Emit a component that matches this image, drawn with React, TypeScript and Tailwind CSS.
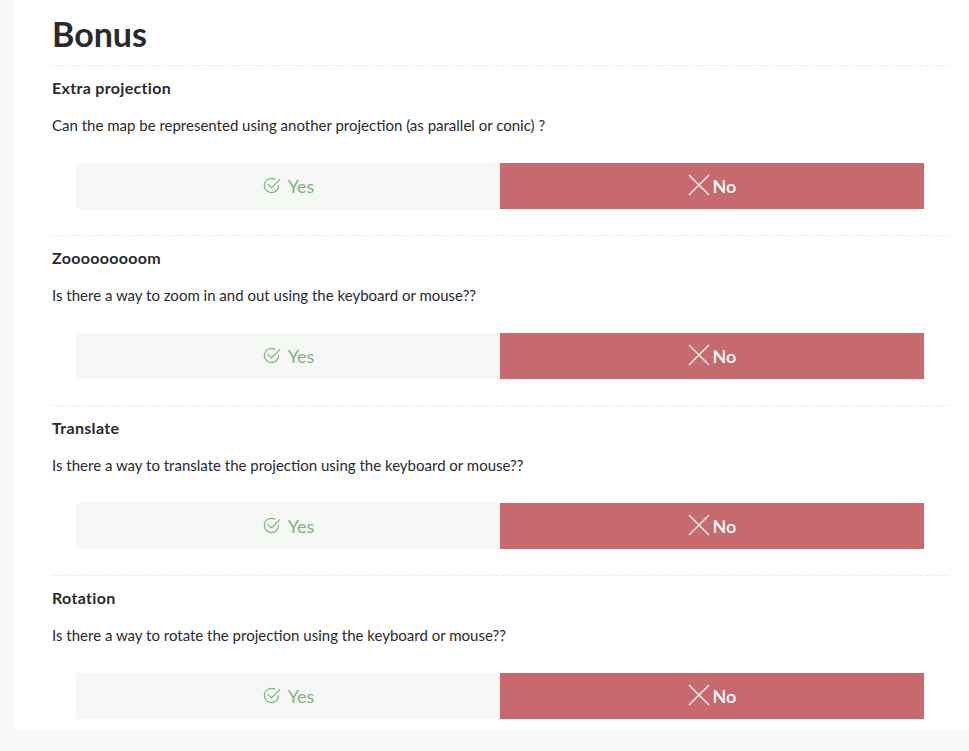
import React from "react";

const sections = [
  {
    title: "Extra projection",
    desc: "Can the map be represented using another projection (as parallel or conic) ?",
  },
  {
    title: "Zooooooooom",
    desc: "Is there a way to zoom in and out using the keyboard or mouse??",
  },
  {
    title: "Translate",
    desc: "Is there a way to translate the projection using the keyboard or mouse??",
  },
  {
    title: "Rotation",
    desc: "Is there a way to rotate the projection using the keyboard or mouse??",
  },
];

function CheckCircle() {
  return (
    <svg width="19" height="19" viewBox="0 0 16 16" fill="currentColor" className="mr-[7px] mb-[2px]">
      <path d="M2.5 8a5.5 5.5 0 0 1 8.25-4.764.5.5 0 0 0 .5-.866A6.5 6.5 0 1 0 14.5 8a.5.5 0 0 0-1 0 5.5 5.5 0 1 1-11 0" />
      <path d="M15.354 3.354a.5.5 0 0 0-.708-.708L8 9.293 5.354 6.646a.5.5 0 1 0-.708.708l3 3a.5.5 0 0 0 .708 0z" />
    </svg>
  );
}

function Cross() {
  return (
    <svg width="22" height="22" viewBox="0 0 22 22" fill="none" stroke="currentColor" strokeWidth="1.3" className="mr-[3px] mb-[2px]">
      <path d="M1 1 L21 21 M21 1 L1 21" />
    </svg>
  );
}

export default function App() {
  return (
    <div
      className="min-h-[751px] bg-[#f8f8f8] pl-[14px]"
      style={{ fontFamily: "Lato, 'Noto Sans', sans-serif" }}
    >
      <div className="bg-white pl-[38px] pr-[21px] pb-[11px] text-[#2a2a2e]">
        <h1 className="pt-[13px] pb-[11px] text-[34px] leading-[41px] font-bold">Bonus</h1>
        {sections.map((s, i) => (
          <div
            key={s.title}
            className={
              i === sections.length - 1
                ? "border-t border-dashed border-[#ebebeb] pt-[11px]"
                : "border-t border-dashed border-[#ebebeb] pt-[11px] pb-[26px]"
            }
          >
            <h2 className="text-[16px] leading-[22px] font-bold tracking-[0.02em]">{s.title}</h2>
            <p className="mt-[15px] text-[15px] leading-[22px]">{s.desc}</p>
            <div className="mt-[27px] mx-[24px] flex h-[46px]">
              <div className="flex-1 bg-[#f6f8f5] text-[#7ab57b] flex items-center justify-center text-[18px]">
                <CheckCircle />
                <span>Yes</span>
              </div>
              <div className="flex-1 bg-[#c8696d] text-white flex items-center justify-center text-[18px] font-semibold">
                <Cross />
                <span>No</span>
              </div>
            </div>
          </div>
        ))}
      </div>
    </div>
  );
}
